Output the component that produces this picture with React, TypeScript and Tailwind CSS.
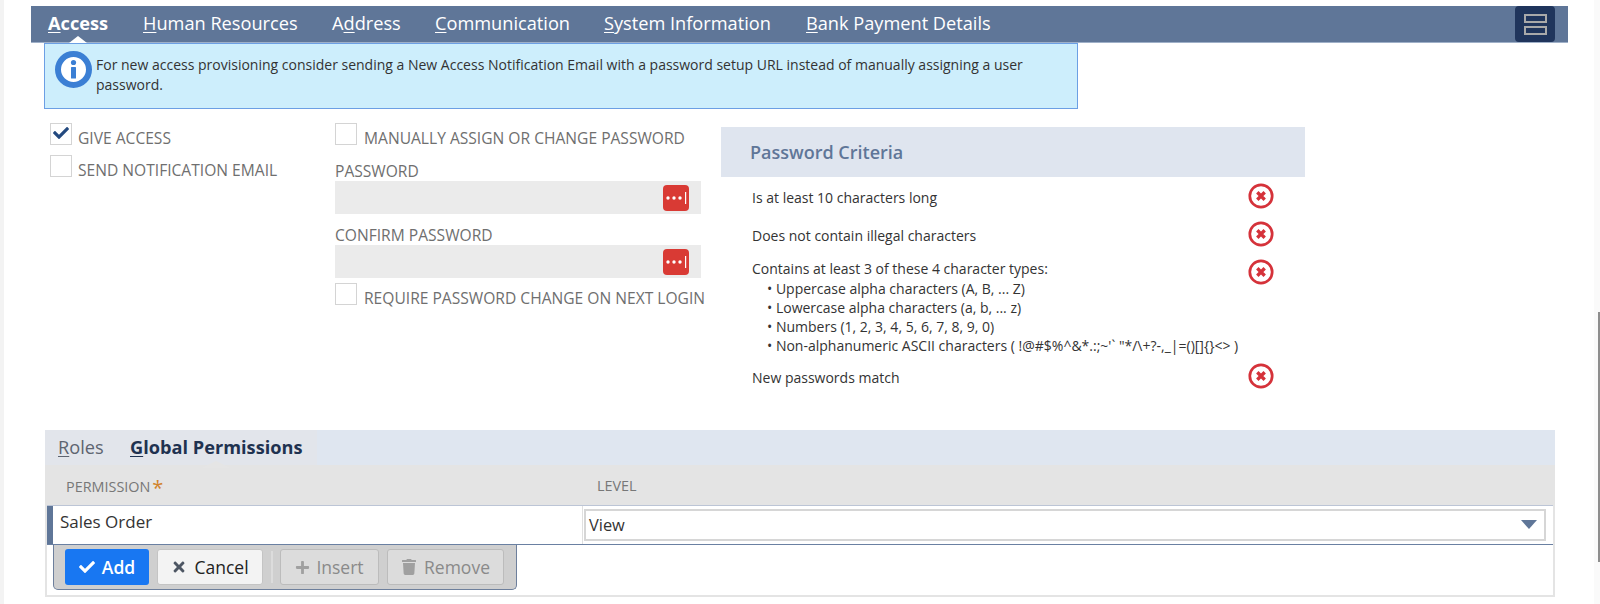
import { FaCheck, FaPlus, FaTimes, FaTrash } from "react-icons/fa";

const navTabs = [
  { pre: "", key: "A", post: "ccess", active: true, cls: "w-[95px]" },
  { pre: "", key: "H", post: "uman Resources", active: false, cls: "w-[189px]" },
  { pre: "A", key: "d", post: "dress", active: false, cls: "w-[103px]" },
  { pre: "", key: "C", post: "ommunication", active: false, cls: "w-[169px]" },
  { pre: "", key: "S", post: "ystem Information", active: false, cls: "w-[202px]" },
  { pre: "", key: "B", post: "ank Payment Details", active: false, cls: "w-[200px]" },
];

const Checkbox = ({ checked }: { checked?: boolean }) => (
  <span className="relative block h-[22px] w-[22px] shrink-0 border border-[#d4d4d4] bg-white">
    {checked && <FaCheck className="absolute left-[2px] top-[1px] text-[16px] text-[#23497f]" />}
  </span>
);

const PasswordKey = () => (
  <svg width="26" height="26" viewBox="0 0 26 26">
    <rect width="26" height="26" rx="4" fill="#d93a34" />
    <circle cx="5" cy="13" r="1.7" fill="#fff" />
    <circle cx="11" cy="13" r="1.7" fill="#fff" />
    <circle cx="17" cy="13" r="1.7" fill="#fff" />
    <rect x="22" y="7" width="1.2" height="12" fill="#fff" />
  </svg>
);

const CrossCircle = () => (
  <svg width="26" height="26" viewBox="0 0 26 26" className="shrink-0">
    <circle cx="13" cy="13" r="11.2" fill="#fff" stroke="#d5323a" strokeWidth="2.7" />
    <path d="M9.3 9.3 16.7 16.7M16.7 9.3 9.3 16.7" stroke="#d5323a" strokeWidth="3.4" />
  </svg>
);

const Criterion = ({ text }: { text: string }) => (
  <div className="flex h-[26px] items-center justify-between pl-[31px] pr-[31px]">
    <span className="pt-[2px]">{text}</span>
    <CrossCircle />
  </div>
);

const CheckRow = ({ label, checked, className }: { label: string; checked?: boolean; className: string }) => (
  <label className={`flex items-end ${className}`}>
    <Checkbox checked={checked} />
    <div className="-mb-[4px] text-[15.6px] leading-[21px] text-[#6f6f6f]">{label}</div>
  </label>
);

const PasswordField = () => (
  <div className="flex h-[33px] w-[366px] items-center justify-end bg-[#ebebeb] pr-[12px]">
    <PasswordKey />
  </div>
);

const App = () => {
  return (
    <div className="flex h-[604px] w-[1600px] overflow-hidden bg-white font-['Open_Sans',sans-serif]">
      <div className="w-[4px] shrink-0 bg-[#f3f3f3]" />

      <main className="min-w-0 flex-1 pl-[27px] pt-[6px]">
        <nav className="relative flex h-[37px] w-[1537px] items-center border-b border-[#9fb0c8] bg-[#5f7698] pl-[17px] text-[18.2px] text-white">
          {navTabs.map((tab) => (
            <span key={tab.key} className={`relative ${tab.cls} ${tab.active ? "font-bold" : ""}`}>
              {tab.pre}
              <span className="underline underline-offset-2">{tab.key}</span>
              {tab.post}
              {tab.active && (
                <span className="absolute left-[21px] top-[26px] h-0 w-0 border-x-[9px] border-b-[7px] border-x-transparent border-b-white" />
              )}
            </span>
          ))}
          <span className="absolute right-[13px] top-0 flex h-[36px] w-[40px] flex-col items-center justify-center gap-[3px] rounded-[4px] bg-[#20355c]">
            <span className="h-[9px] w-[23px] border-2 border-[#a9a9a9]" />
            <span className="h-[9px] w-[23px] border-2 border-[#a9a9a9]" />
          </span>
        </nav>

        <div className="ml-[13px] flex h-[66px] w-[1034px] gap-[4px] border border-[#6c9fe4] bg-[#cdeefc] pl-[10px] pt-[7px]">
          <svg width="37" height="37" viewBox="0 0 37 37" className="shrink-0">
            <circle cx="18.5" cy="18.5" r="15.5" fill="#fff" stroke="#3b7fd4" strokeWidth="6" />
            <circle cx="18.5" cy="11.5" r="2.6" fill="#3b7fd4" />
            <rect x="16" y="16" width="5" height="11.5" rx="0.5" fill="#3b7fd4" />
          </svg>
          <p className="w-[935px] pt-[4px] text-[14px] leading-[20px] text-[#333]">
            For new access provisioning consider sending a New Access Notification Email with a password setup URL instead of manually assigning a user password.
          </p>
        </div>

        <div className="mt-[14px] flex h-[307px] items-start">
          <div className="ml-[19px] flex w-[285px] flex-col gap-[10px]">
            <CheckRow checked label="GIVE ACCESS" className="gap-[6px]" />
            <CheckRow label="SEND NOTIFICATION EMAIL" className="gap-[6px]" />
          </div>

          <div className="w-[386px]">
            <CheckRow label="MANUALLY ASSIGN OR CHANGE PASSWORD" className="gap-[7px]" />
            <div className="mt-[17px] text-[15.6px] leading-[19px] text-[#6f6f6f]">PASSWORD</div>
            <PasswordField />
            <div className="mt-[12px] text-[15.6px] leading-[19px] text-[#6f6f6f]">CONFIRM PASSWORD</div>
            <PasswordField />
            <CheckRow label="REQUIRE PASSWORD CHANGE ON NEXT LOGIN" className="mt-[5px] gap-[7px] whitespace-nowrap" />
          </div>

          <section className="mt-[4px] w-[584px] text-[14px] leading-[19px] text-[#333]">
            <h3 className="mb-[6px] h-[50px] bg-[#dfe5ef] pl-[29px] text-[18px] font-semibold leading-[50px] text-[#5f7698]">
              Password Criteria
            </h3>
            <div className="flex flex-col gap-[12px]">
              <Criterion text="Is at least 10 characters long" />
              <Criterion text="Does not contain illegal characters" />
              <div className="-mb-[4px] flex justify-between pl-[31px] pr-[31px]">
                <div>
                  <div className="mb-[1px]">Contains at least 3 of these 4 character types:</div>
                  <ul className="pl-[15px]">
                    {[
                      "Uppercase alpha characters (A, B, ... Z)",
                      "Lowercase alpha characters (a, b, ... z)",
                      "Numbers (1, 2, 3, 4, 5, 6, 7, 8, 9, 0)",
                      "Non-alphanumeric ASCII characters ( !@#$%^&*.:;~'` \"*/\\+?-,_|=()[]{}<> )",
                    ].map((item) => (
                      <li key={item}>• {item}</li>
                    ))}
                  </ul>
                </div>
                <CrossCircle />
              </div>
              <Criterion text="New passwords match" />
            </div>
          </section>
        </div>

        <div className="ml-[14px] w-[1510px]">
          <div className="flex h-[35px] bg-[#dfe6f0] text-[18.2px]">
            <div className="flex w-[272px] items-center bg-[#e2e5eb] pl-[13px]">
              <span className="w-[72px] text-[#5d6470]">
                <span className="underline underline-offset-2">R</span>oles
              </span>
              <span className="relative font-bold text-[#1f3250]">
                <span className="underline underline-offset-2">G</span>lobal Permissions
                <span className="absolute left-[72px] top-[27px] h-0 w-0 border-x-[14px] border-b-[7px] border-x-transparent border-b-[#e5e5e5]" />
              </span>
            </div>
          </div>

          <div className="h-[132px] border-x-2 border-b-2 border-[#e4e4e4]">
            <div className="flex h-[40px] items-center bg-[#e4e4e4] pt-[2px] text-[14.4px] text-[#777]">
              <div className="w-[550px] pl-[19px]">
                PERMISSION<span className="relative top-[3px] ml-[2px] text-[20px] leading-none text-[#d1822a]">*</span>
              </div>
              <div>LEVEL</div>
            </div>
            <div className="flex h-[40px] border-y border-b-[#6a80a2] border-t-[#bcc5d6]">
              <div className="w-[6px] bg-[#5f7698]" />
              <div className="w-[530px] border-r border-[#e0e0e0] pl-[7px] pt-[3px] text-[17px] leading-[26px] text-[#333]">Sales Order</div>
              <div className="relative ml-[1px] mt-[3px] flex h-[32px] w-[962px] items-center border-2 border-[#d6d6d6] pl-[3px] text-[16.4px] text-[#333]">
                View
                <span className="absolute right-[7px] top-[9px] h-0 w-0 border-x-[8px] border-t-[9px] border-x-transparent border-t-[#5f7698]" />
              </div>
            </div>
            <div className="ml-[6px] flex h-[45px] w-[464px] items-center gap-[8px] rounded-b-[5px] border border-t-0 border-[#6d7f9c] bg-[#cfcfcf] pl-[11px] text-[17.5px]">
              <button type="button" className="flex h-[36px] w-[84px] items-center justify-center gap-[7px] rounded-[3px] bg-[#1877f2] font-semibold text-white">
                <FaCheck className="text-[16px]" />
                Add
              </button>
              <button type="button" className="flex h-[36px] w-[106px] items-center justify-center gap-[7px] rounded-[3px] border border-[#c4c4c4] bg-[#f3f3f3] text-[#222]">
                <FaTimes className="text-[16px] text-[#4d5663]" />
                Cancel
              </button>
              <span className="h-[32px] w-[2px] bg-[#dcdcdc]" />
              <button type="button" className="-ml-[1px] flex h-[36px] w-[99px] items-center justify-center gap-[6px] rounded-[3px] border border-[#bcbcbc] bg-[#dcdcdc] text-[#8a8a8a]">
                <FaPlus className="text-[15px] text-[#a0a0a0]" />
                Insert
              </button>
              <button type="button" className="flex h-[36px] w-[117px] items-center justify-center gap-[7px] rounded-[3px] border border-[#bcbcbc] bg-[#dcdcdc] text-[#8a8a8a]">
                <FaTrash className="text-[16px] text-[#a0a0a0]" />
                Remove
              </button>
            </div>
          </div>
        </div>
      </main>

      <div className="flex w-[6px] shrink-0 flex-col bg-[#fafafa]">
        <div className="h-[312px]" />
        <div className="ml-[4px] h-[250px] w-[2px] bg-[#8e8e8e]" />
      </div>
    </div>
  );
};

export default App;
